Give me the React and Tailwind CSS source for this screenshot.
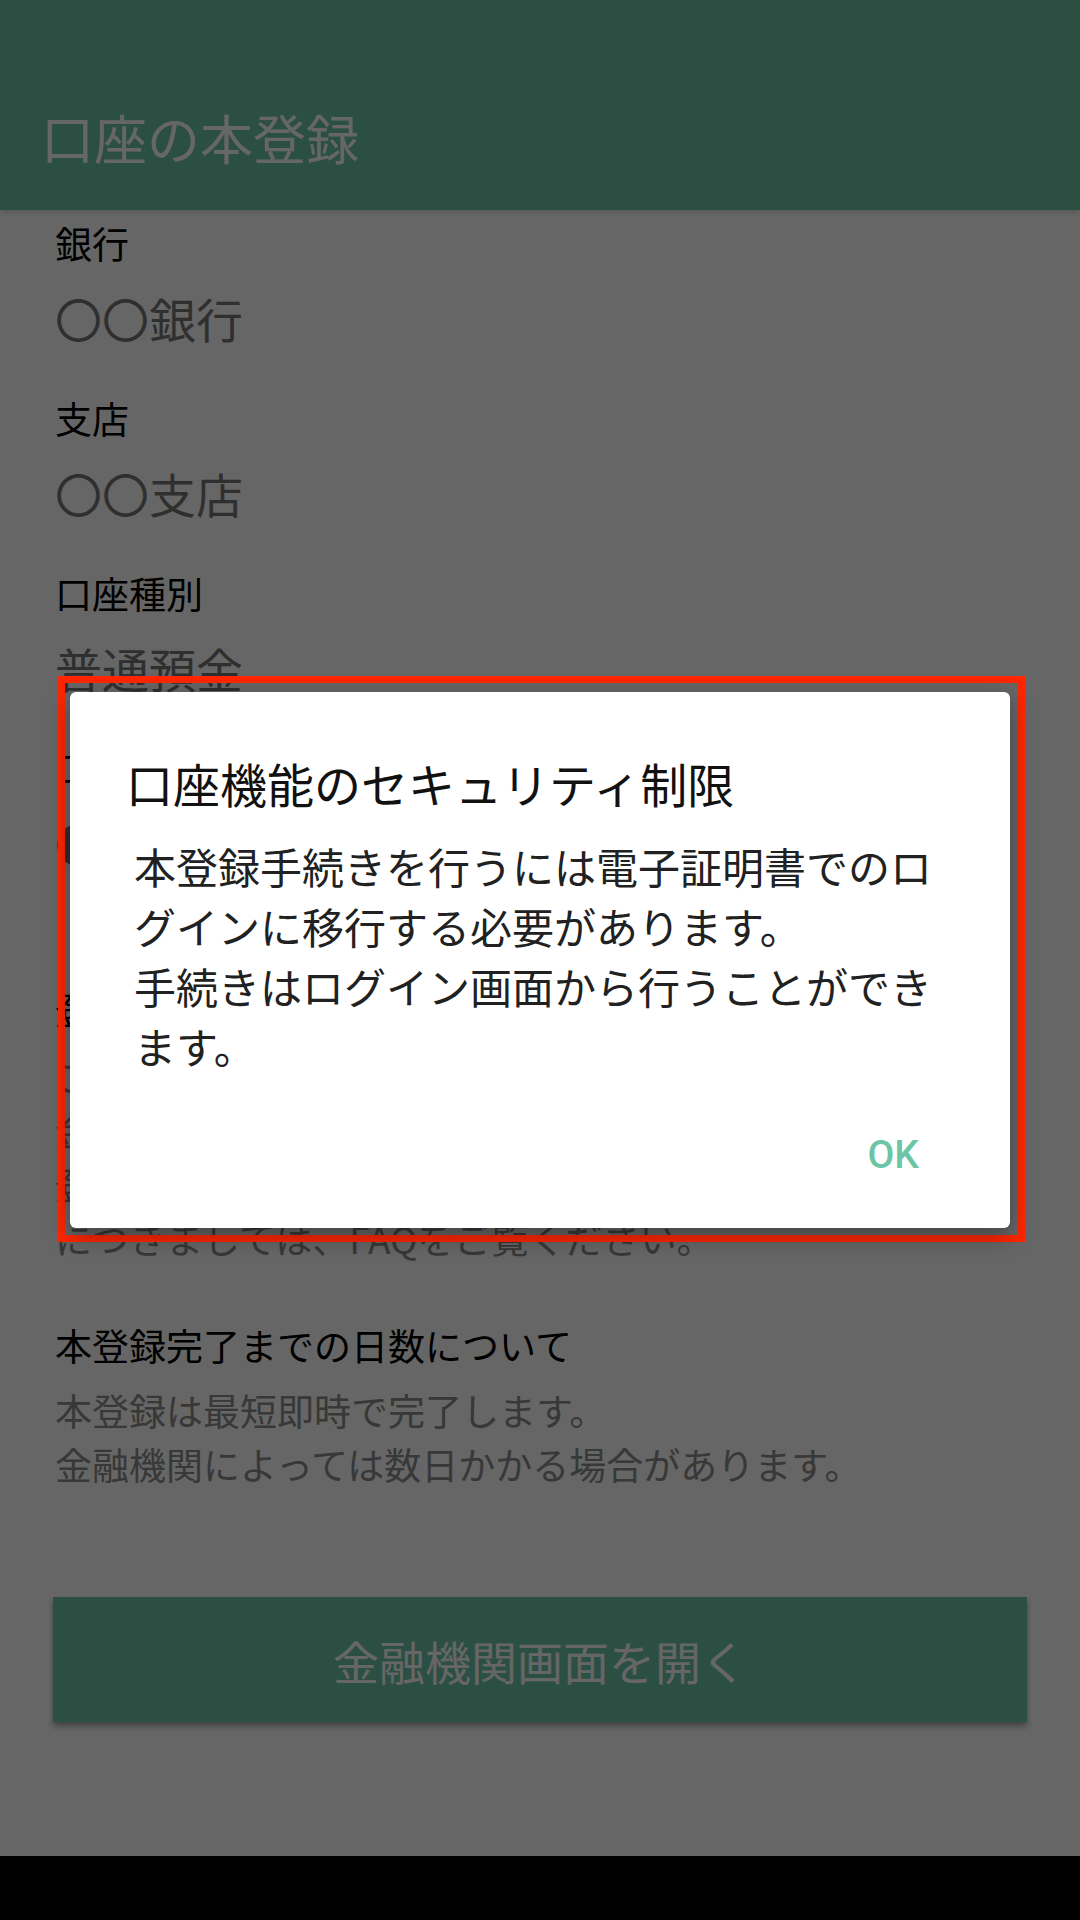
import React from "react";

function Field({ label, value }) {
  return (
    <div className="flex flex-col gap-[25px]">
      <div className="text-[37px] leading-[44px] text-black">{label}</div>
      <div className="text-[47px] leading-[56px] text-[#767676]">{value}</div>
    </div>
  );
}

export default function App() {
  return (
    <div className="relative w-[1080px] h-[1920px] flex flex-col bg-white overflow-hidden font-['Noto_Sans_CJK_JP','Noto_Sans',sans-serif]">
      <header className="h-[210px] shrink-0 bg-[#6cc5a7] pt-[107px] pl-[41px] shadow-md">
        <h1 className="text-[53px] leading-[60px] text-white font-normal">口座の本登録</h1>
      </header>

      <main className="flex-1 flex flex-col px-[55px]">
        <div className="mt-[11px] flex flex-col gap-[50px]">
          <Field label="銀行" value="〇〇銀行" />
          <Field label="支店" value="〇〇支店" />
          <Field label="口座種別" value="普通預金" />
          <Field label="口座番号" value="●●●1234" />
        </div>

        <div className="mt-[116px] text-[37px] leading-[44px] text-black">登録できる口座について</div>
        <div className="mt-[18px] text-[37px] leading-[54px] text-[#8c8c8c] whitespace-nowrap">
          <div>ご登録いただける口座は、ご本人名義の口座のみです。※</div>
          <div>金融機関により登録できない口座がございます。</div>
          <div>登録可能な金融機関や口座の種類などの詳細</div>
          <div>につきましては、FAQをご覧ください。</div>
        </div>

        <div className="mt-[58px] text-[37px] leading-[44px] text-black">本登録完了までの日数について</div>
        <div className="mt-[16px] text-[37px] leading-[54px] text-[#8c8c8c] whitespace-nowrap">
          <div>本登録は最短即時で完了します。</div>
          <div>金融機関によっては数日かかる場合があります。</div>
        </div>

        <button className="mt-[106px] -mx-[2px] h-[125px] bg-[#6cc5a7] text-white text-[46px] leading-[56px] flex items-center justify-center shadow-[0_4px_6px_rgba(0,0,0,0.35)]">
          金融機関画面を開く
        </button>
      </main>

      <div className="h-[64px] shrink-0 bg-black" />

      {/* scrim + dialog */}
      <div className="absolute inset-0 bg-[rgba(0,0,0,0.6)] flex flex-col items-start pt-[676px] pl-[58px]">
        <div className="w-[967px] h-[566px] border-[7px] border-[#ff2600] pt-[9px] pl-[5px]">
          <div className="w-[940px] h-[536px] bg-white rounded-[6px] shadow-[0_8px_24px_rgba(0,0,0,0.35)] flex flex-col">
            <div className="pt-[61px] pl-[56px] text-[47px] leading-[60px] text-[#111111] whitespace-nowrap">
              口座機能のセキュリティ制限
            </div>
            <div className="mt-[23px] pl-[64px] text-[42px] leading-[60px] text-[#212121] whitespace-nowrap">
              <div>本登録手続きを行うには電子証明書でのロ</div>
              <div>グインに移行する必要があります。</div>
              <div>手続きはログイン画面から行うことができ</div>
              <div>ます。</div>
            </div>
            <div className="mt-[59px] flex justify-end pr-[91px]">
              <span className="font-['Roboto',sans-serif] font-medium text-[39px] leading-[40px] text-[#6cc5a7]">OK</span>
            </div>
          </div>
        </div>
      </div>
    </div>
  );
}
